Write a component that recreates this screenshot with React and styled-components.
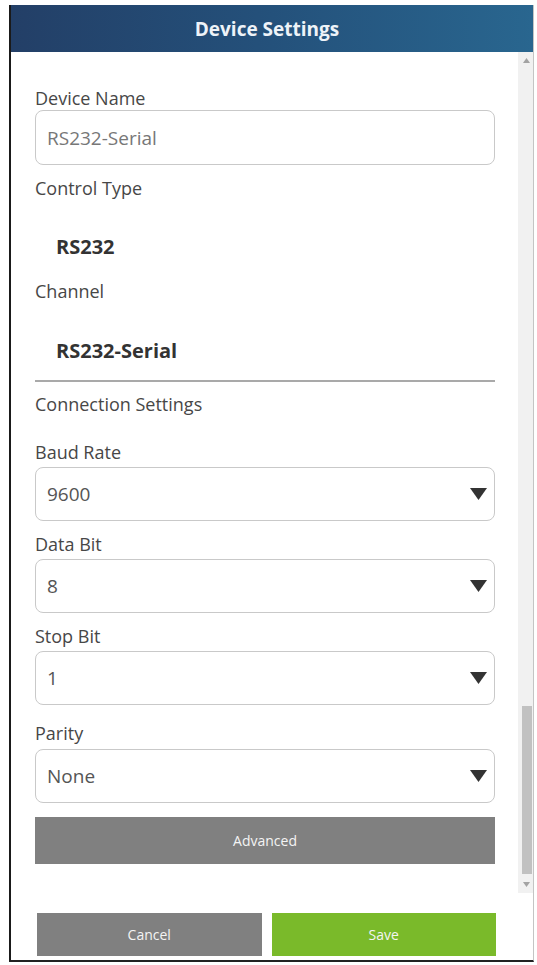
import React from "react";
import styled, { createGlobalStyle } from "styled-components";

const Global = createGlobalStyle`
  html, body { margin: 0; padding: 0; background: #fff; }
  body { font-family: "Open Sans", "Noto Sans", Arial, sans-serif; }
`;

const Page = styled.div`
  padding: 5px 0 0 9px;
  width: 537px;
  height: 965px;
  box-sizing: border-box;
`;

const Window = styled.div`
  width: 525px;
  height: 957px;
  box-sizing: border-box;
  border-left: 2px solid #1a1a1a;
  border-bottom: 2px solid #222;
  border-right: 1px solid #c4c4c4;
  display: flex;
  flex-direction: column;
  background: #fff;
`;

const Header = styled.div`
  height: 47px;
  flex: none;
  display: flex;
  align-items: center;
  justify-content: center;
  padding-right: 10px;
  background: linear-gradient(90deg, #233f67 0%, #24517b 50%, #29668f 100%);
  color: #eef3f8;
  font-size: 19px;
  font-weight: 700;
`;

const Body = styled.div`
  flex: 1;
  display: flex;
  min-height: 0;
`;

const Content = styled.div`
  flex: 1;
  padding: 34px 23px 0 24px;
  display: flex;
  flex-direction: column;
`;

const Label = styled.div`
  height: 24px;
  line-height: 24px;
  font-size: 18px;
  color: #474747;
  margin-top: ${(p) => p.$mt || 0}px;
`;

const Box = styled.div`
  height: ${(p) => p.$h || 54}px;
  box-sizing: border-box;
  border: 1.5px solid #c9c9c9;
  border-radius: 8px;
  display: flex;
  align-items: center;
  justify-content: space-between;
  padding: 0 7px 0 11px;
  margin-top: ${(p) => p.$mt || 0}px;
  font-size: 19px;
  color: ${(p) => p.$color || "#555"};
  background: #fff;
`;

const Value = styled.div`
  height: 26px;
  line-height: 26px;
  font-size: 20px;
  font-weight: 700;
  color: #333;
  padding-left: 21px;
  margin-top: ${(p) => p.$mt || 0}px;
`;

const Divider = styled.div`
  height: 2px;
  background: #a9a9a9;
  margin-top: 16px;
`;

const WideButton = styled.div`
  height: 47px;
  margin-top: 14px;
  background: #808080;
  color: #f4f4f4;
  font-size: 14px;
  display: flex;
  align-items: center;
  justify-content: center;
`;

const ScrollBar = styled.div`
  width: 15px;
  flex: none;
  background: #f1f1f1;
  display: flex;
  flex-direction: column;
  align-items: center;
  padding: 6px 0 6px 2px;
  box-sizing: border-box;
  margin-bottom: 6px;
`;

const Track = styled.div`
  flex: 1;
  width: 100%;
  display: flex;
  flex-direction: column;
  justify-content: flex-end;
  align-items: center;
  padding: 4px 0;
`;

const Thumb = styled.div`
  width: 10px;
  height: 168px;
  background: #c1c1c1;
  margin-bottom: 4px;
`;

const Footer = styled.div`
  flex: none;
  display: flex;
  gap: 10px;
  padding: 14px 37px 4px 26px;
`;

const FootButton = styled.div`
  flex: 1;
  height: 43px;
  background: ${(p) => p.$bg};
  color: #f4f4f4;
  font-size: 14px;
  display: flex;
  align-items: center;
  justify-content: center;
`;

const Caret = () => (
  <svg width="17" height="12" viewBox="0 0 17 12">
    <polygon points="0,0 17,0 8.5,12" fill="#333" />
  </svg>
);

const Arrow = ({ up }) => (
  <svg width="7" height="5" viewBox="0 0 7 5">
    <polygon points={up ? "0,5 7,5 3.5,0" : "0,0 7,0 3.5,5"} fill="#a3a3a3" />
  </svg>
);

const Select = ({ value, mt }) => (
  <Box $mt={mt} $h={54} $color="#555">
    <span>{value}</span>
    <Caret />
  </Box>
);

export default function App() {
  return (
    <Page>
      <Global />
      <Window>
        <Header>Device Settings</Header>
        <Body>
          <Content>
            <Label>Device Name</Label>
            <Box $mt={0} $h={55} $color="#777">RS232-Serial</Box>
            <Label $mt={11}>Control Type</Label>
            <Value $mt={34}>RS232</Value>
            <Label $mt={19}>Channel</Label>
            <Value $mt={35}>RS232-Serial</Value>
            <Divider />
            <Label $mt={10}>Connection Settings</Label>
            <Label $mt={24}>Baud Rate</Label>
            <Select mt={3} value="9600" />
            <Label $mt={11}>Data Bit</Label>
            <Select mt={3} value="8" />
            <Label $mt={11}>Stop Bit</Label>
            <Select mt={3} value="1" />
            <Label $mt={16}>Parity</Label>
            <Select mt={4} value="None" />
            <WideButton>Advanced</WideButton>
          </Content>
          <ScrollBar>
            <Arrow up />
            <Track>
              <Thumb />
            </Track>
            <Arrow />
          </ScrollBar>
        </Body>
        <Footer>
          <FootButton $bg="#808080">Cancel</FootButton>
          <FootButton $bg="#7aba2a">Save</FootButton>
        </Footer>
      </Window>
    </Page>
  );
}
